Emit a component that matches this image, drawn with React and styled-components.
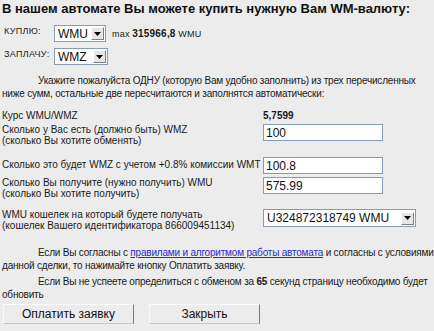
import React from 'react';
import styled, { createGlobalStyle } from 'styled-components';

const GlobalStyle = createGlobalStyle`
    body {
        margin: 0;
        background: #ececec;
        font-family: "Liberation Sans", Arial, sans-serif;
        font-size: 10px;
        color: #1a1a1a;
    }
`

// top margins are tuned per row so the rows sit where the original form puts them
const rows = [
    { label: ['Сколько у Вас есть (должно быть) WMZ', '(сколько Вы хотите обменять)'], value: '100', mt: 0, lt: 0 },
    { label: ['Сколько это будет WMZ с учетом +0.8% комиссии WMT'], value: '100.8', mt: 9, lt: 11 },
    { label: ['Сколько Вы получите (нужно получить) WMU', '(сколько Вы хотите получить)'], value: '575.99', mt: 1, lt: 1 },
];

function FakeSelect({ value, width, height }) {
    return (
        <SelectBox width={width} height={height}>
            <SelectText>{value}</SelectText>
            <SelectArrow>
                <svg width="7" height="4" viewBox="0 0 7 4"><path d="M0 0h7L3.5 4z" fill="#000" /></svg>
            </SelectArrow>
        </SelectBox>
    );
}

export default function App() {
    return (<>
        <GlobalStyle />
        <Page>
            <Title>В нашем автомате Вы можете купить нужную Вам WM-валюту:</Title>
            <PickRow>
                <PickLabel>КУПЛЮ:</PickLabel>
                <FakeSelect value="WMU" width={52} />
                <Max>max <b>315966,8</b> WMU</Max>
            </PickRow>
            <PickRow second>
                <PickLabel>ЗАПЛАЧУ:</PickLabel>
                <FakeSelect value="WMZ" width={54} />
            </PickRow>

            <Para top={9}>
                Укажите пожалуйста ОДНУ (которую Вам удобно заполнить) из трех перечисленных<br />
                ниже сумм, остальные две пересчитаются и заполнятся автоматически:
            </Para>

            <Form>
                <Label>Курс WMU/WMZ</Label>
                <Rate>5,7599</Rate>
                {rows.map((r, i) => (
                    <React.Fragment key={i}>
                        <Label mt={r.lt}>{r.label.map((l, j) => <div key={j}>{l}</div>)}</Label>
                        <Field mt={r.mt} defaultValue={r.value} />
                    </React.Fragment>
                ))}
                <Label mt={8}>
                    <div>WMU кошелек на который будете получать</div>
                    <div>(кошелек Вашего идентификатора 866009451134)</div>
                </Label>
                <WalletCell>
                    <FakeSelect value="U324872318749 WMU" width={153} height={18} />
                </WalletCell>
            </Form>

            <Para top={15}>
                Если Вы согласны с <Link href="#">правилами и алгоритмом работы автомата</Link> и согласны с условиями<br />
                данной сделки, то нажимайте кнопку Оплатить заявку.
            </Para>
            <Para top={3}>
                Если Вы не успеете определиться с обменом за <b>65</b> секунд страницу необходимо будет<br />
                обновить
            </Para>

            <Buttons>
                <Button width={131}>Оплатить заявку</Button>
                <Button width={111}>Закрыть</Button>
            </Buttons>
        </Page>
    </>
    )
}

const Page = styled.div`
    width: 434px;
    height: 331px;
    box-sizing: border-box;
    padding: 1px 2px 0 2px;
    overflow: hidden;
`

const Title = styled.div`
    font-size: 13px;
    font-weight: bold;
    color: #111;
    line-height: 16px;
    white-space: nowrap;
`

const PickRow = styled.div`
    display: flex;
    align-items: center;
    height: 17px;
    margin-top: ${p => p.second ? 6 : 8}px;
`

const PickLabel = styled.div`
    width: 52px;
    font-size: 9px;
    letter-spacing: 0.3px;
    padding-left: 2px;
    margin-top: -5px;
    box-sizing: border-box;
    white-space: nowrap;
`

const SelectBox = styled.div`
    display: flex;
    align-items: center;
    width: ${p => p.width}px;
    height: ${p => p.height || 17}px;
    box-sizing: border-box;
    background: #fff;
    border: 1px solid #8a9ab0;
    padding: 1px;
`

const SelectText = styled.span`
    flex: 1;
    font-size: 12px;
    padding-left: 2px;
    color: #111;
    white-space: nowrap;
`

const SelectArrow = styled.span`
    display: flex;
    align-items: center;
    justify-content: center;
    width: 13px;
    height: 13px;
    background: #e6e6e6;
    border: 1px solid;
    border-color: #fff #808080 #808080 #fff;
    box-sizing: border-box;
`

const Max = styled.span`
    margin-left: 6px;
    font-size: 9px;
    letter-spacing: 0.2px;
    b { font-size: 10px; }
`

const Para = styled.p`
    margin: ${p => p.top}px 0 0;
    text-indent: 36px;
    line-height: 13px;
    letter-spacing: -0.2px;
    white-space: nowrap;
`

const Form = styled.div`
    display: grid;
    grid-template-columns: 261px 120px;
    align-items: start;
    row-gap: 2px;
    margin-top: 10px;
`

const Label = styled.div`
    line-height: 11px;
    margin-top: ${p => p.mt || 0}px;
    white-space: nowrap;
`

const Rate = styled.div`
    font-weight: bold;
    line-height: 12px;
`

const Field = styled.input`
    width: 120px;
    height: 17px;
    box-sizing: border-box;
    margin: ${p => p.mt}px 0 0;
    border: 1px solid #7f9db9;
    background: #fff;
    font-family: "Liberation Sans", Arial, sans-serif;
    font-size: 12px;
    padding: 0 2px;
    color: #111;
    outline: none;
`

const WalletCell = styled.div`
    margin-top: 8px;
    width: 153px;
`

const Link = styled.a`
    color: #2a2ac8;
    text-decoration: underline;
`

const Buttons = styled.div`
    display: flex;
    gap: 15px;
    padding-left: 1px;
    margin-top: 3px;
`

const Button = styled.button`
    width: ${p => p.width}px;
    height: 20px;
    background: #ececec;
    border: 1px solid;
    border-color: #fafafa #7a7a7a #c8c8c8 #fafafa;
    font-family: "Liberation Sans", Arial, sans-serif;
    font-size: 12px;
    color: #111;
    padding: 0;
`
